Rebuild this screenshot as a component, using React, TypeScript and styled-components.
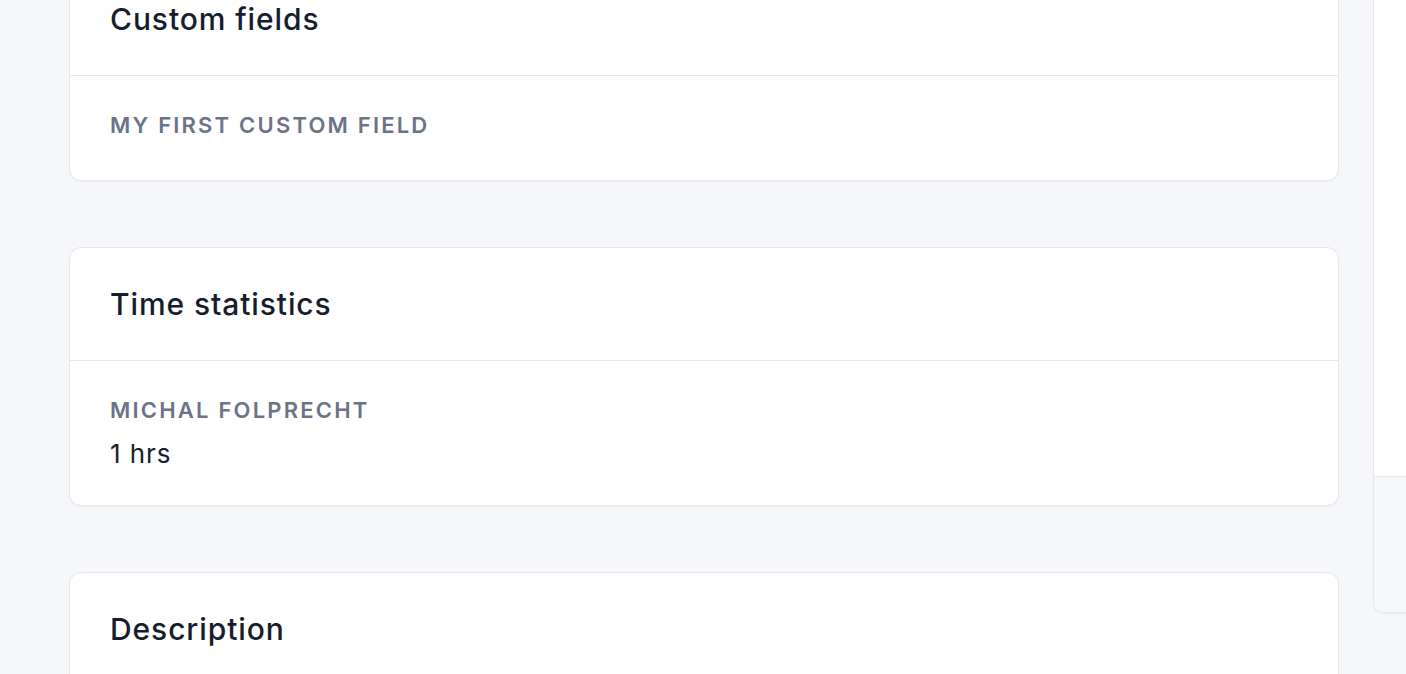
import styled, { createGlobalStyle } from "styled-components";

const GlobalStyle = createGlobalStyle`
  html, body {
    margin: 0;
    padding: 0;
    background: #f6f7fa;
    font-family: Inter, "Noto Sans", sans-serif;
    overflow: hidden;
  }
`;

const Page = styled.div`
  display: flex;
  align-items: flex-start;
  gap: 34px;
  padding-left: 69px;
  margin-top: -38px;
  height: 712px;
  overflow: hidden;
`;

const MainColumn = styled.div`
  display: flex;
  flex-direction: column;
  gap: 66px;
  width: 1270px;
  flex-shrink: 0;
`;

const Card = styled.section`
  background: #ffffff;
  border: 1px solid #e5e7eb;
  border-radius: 12px;
  box-shadow: 0 1px 2px rgba(16, 24, 40, 0.04);
`;

const CardHeader = styled.div`
  height: 112px;
  display: flex;
  align-items: center;
  padding: 0 40px;
  border-bottom: 1px solid #e5e7eb;
`;

const CardTitle = styled.h2`
  margin: 0;
  font-size: 30px;
  font-weight: 500;
  color: #161d2d;
  letter-spacing: 0.9px;
`;

const CardBody = styled.div<{ $bottom?: number }>`
  padding: 35px 40px ${(p) => p.$bottom ?? 35}px;
  min-height: 28px;
`;

const FieldLabel = styled.div`
  font-size: 22px;
  line-height: 28px;
  font-weight: 600;
  letter-spacing: 2.2px;
  text-transform: uppercase;
  color: #6b7387;
`;

const FieldValue = styled.div`
  margin-top: 14px;
  font-size: 26px;
  line-height: 32px;
  letter-spacing: 0.9px;
  color: #161d2d;
`;

const SideColumn = styled.div`
  flex: 1;
  min-width: 0;
`;

const SideCard = styled.aside`
  width: 420px;
  border: 1px solid #e5e7eb;
  border-radius: 10px;
  overflow: hidden;
  box-shadow: 0 1px 2px rgba(16, 24, 40, 0.05);
`;

const SideBody = styled.div`
  height: 513px;
  background: #ffffff;
`;

const SideFooter = styled.div`
  height: 135px;
  background: #f7f8fb;
  border-top: 1px solid #e5e7eb;
`;

const App = () => {
  return (
    <>
      <GlobalStyle />
      <Page>
        <MainColumn>
          <Card>
            <CardHeader>
              <CardTitle>Custom fields</CardTitle>
            </CardHeader>
            <CardBody $bottom={41}>
              <FieldLabel>My first custom field</FieldLabel>
            </CardBody>
          </Card>

          <Card>
            <CardHeader>
              <CardTitle>Time statistics</CardTitle>
            </CardHeader>
            <CardBody>
              <FieldLabel>Michal Folprecht</FieldLabel>
              <FieldValue>1 hrs</FieldValue>
            </CardBody>
          </Card>

          <Card>
            <CardHeader>
              <CardTitle>Description</CardTitle>
            </CardHeader>
            <CardBody />
          </Card>
        </MainColumn>

        <SideColumn>
          <SideCard>
            <SideBody />
            <SideFooter />
          </SideCard>
        </SideColumn>
      </Page>
    </>
  );
};

export default App;
